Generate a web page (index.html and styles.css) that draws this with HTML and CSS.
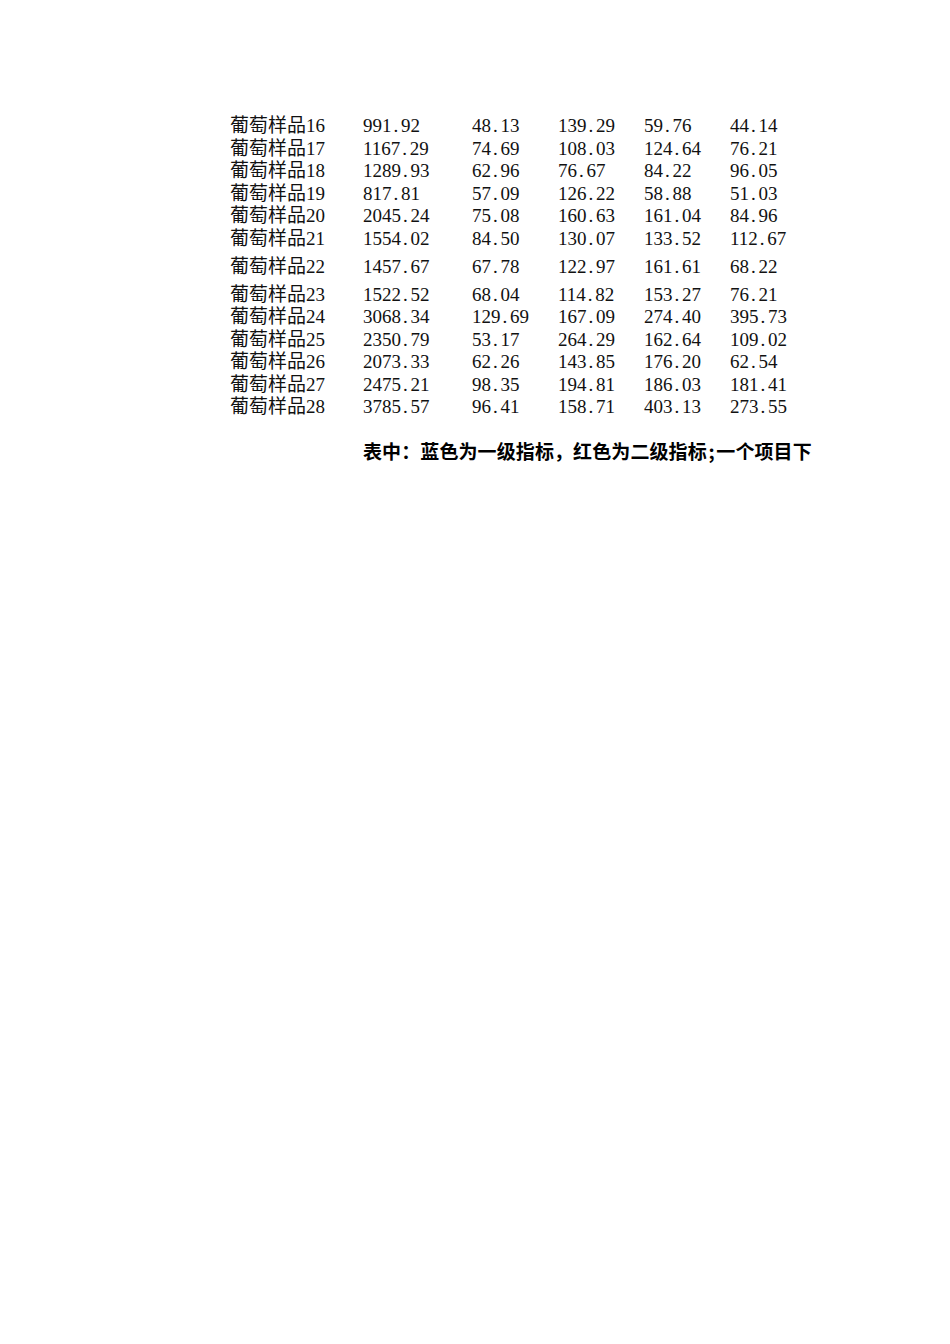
FILE: index.html
```html
<!DOCTYPE html>
<html lang="zh">
<head>
<meta charset="utf-8">
<link rel="stylesheet" href="styles.css">
</head>
<body>
<div class="page">
  <div class="table">
    <div class="row"><span>葡萄样品16</span><span>991<i>.</i>92</span><span>48<i>.</i>13</span><span>139<i>.</i>29</span><span>59<i>.</i>76</span><span>44<i>.</i>14</span></div>
    <div class="row"><span>葡萄样品17</span><span>1167<i>.</i>29</span><span>74<i>.</i>69</span><span>108<i>.</i>03</span><span>124<i>.</i>64</span><span>76<i>.</i>21</span></div>
    <div class="row"><span>葡萄样品18</span><span>1289<i>.</i>93</span><span>62<i>.</i>96</span><span>76<i>.</i>67</span><span>84<i>.</i>22</span><span>96<i>.</i>05</span></div>
    <div class="row"><span>葡萄样品19</span><span>817<i>.</i>81</span><span>57<i>.</i>09</span><span>126<i>.</i>22</span><span>58<i>.</i>88</span><span>51<i>.</i>03</span></div>
    <div class="row"><span>葡萄样品20</span><span>2045<i>.</i>24</span><span>75<i>.</i>08</span><span>160<i>.</i>63</span><span>161<i>.</i>04</span><span>84<i>.</i>96</span></div>
    <div class="row"><span>葡萄样品21</span><span>1554<i>.</i>02</span><span>84<i>.</i>50</span><span>130<i>.</i>07</span><span>133<i>.</i>52</span><span>112<i>.</i>67</span></div>
    <div class="row tall"><span>葡萄样品22</span><span>1457<i>.</i>67</span><span>67<i>.</i>78</span><span>122<i>.</i>97</span><span>161<i>.</i>61</span><span>68<i>.</i>22</span></div>
    <div class="row tall"><span>葡萄样品23</span><span>1522<i>.</i>52</span><span>68<i>.</i>04</span><span>114<i>.</i>82</span><span>153<i>.</i>27</span><span>76<i>.</i>21</span></div>
    <div class="row"><span>葡萄样品24</span><span>3068<i>.</i>34</span><span>129<i>.</i>69</span><span>167<i>.</i>09</span><span>274<i>.</i>40</span><span>395<i>.</i>73</span></div>
    <div class="row"><span>葡萄样品25</span><span>2350<i>.</i>79</span><span>53<i>.</i>17</span><span>264<i>.</i>29</span><span>162<i>.</i>64</span><span>109<i>.</i>02</span></div>
    <div class="row"><span>葡萄样品26</span><span>2073<i>.</i>33</span><span>62<i>.</i>26</span><span>143<i>.</i>85</span><span>176<i>.</i>20</span><span>62<i>.</i>54</span></div>
    <div class="row"><span>葡萄样品27</span><span>2475<i>.</i>21</span><span>98<i>.</i>35</span><span>194<i>.</i>81</span><span>186<i>.</i>03</span><span>181<i>.</i>41</span></div>
    <div class="row"><span>葡萄样品28</span><span>3785<i>.</i>57</span><span>96<i>.</i>41</span><span>158<i>.</i>71</span><span>403<i>.</i>13</span><span>273<i>.</i>55</span></div>
  </div>
  <p class="note">表中：蓝色为一级指标，红色为二级指标<i>;</i>一个项目下</p>
</div>
</body>
</html>
```

FILE: styles.css
```css
html, body {
  margin: 0;
  padding: 0;
  background: #fff;
}

.page {
  width: 950px;
  height: 1344px;
  box-sizing: border-box;
  padding: 115px 0 0 230px;
}

.table {
  display: flex;
  flex-direction: column;
}

.row {
  display: grid;
  grid-template-columns: 133px 109px 86px 86px 86px 100px;
  height: 22.5px;
  line-height: 22.5px;
  font-family: "Liberation Serif", "Noto Sans CJK SC", serif;
  font-size: 19px;
  color: #111;
  white-space: nowrap;
}

.row.tall {
  margin-top: 5.5px;
}

.row i {
  font-style: normal;
  display: inline-block;
  width: 9.5px;
  text-align: left;
  padding-left: 2px;
  box-sizing: border-box;
}

.note {
  margin: 21px 0 0 133px;
  font-family: "Noto Sans CJK SC", sans-serif;
  font-weight: bold;
  font-size: 19px;
  line-height: 22px;
  letter-spacing: 0.1px;
  color: #000;
  white-space: nowrap;
}

.note i {
  font-style: normal;
  display: inline-block;
  width: 9.5px;
  text-align: center;
}
```
